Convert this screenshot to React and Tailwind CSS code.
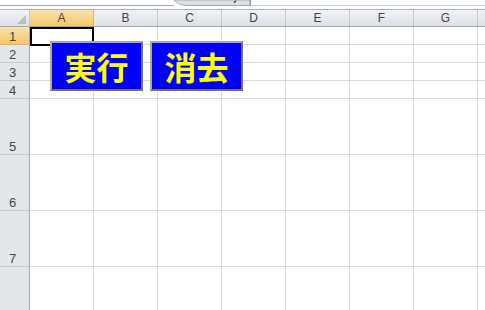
import React from 'react'

const cols = ['A', 'B', 'C', 'D', 'E', 'F', 'G']
const rows = [
  { n: 1, h: 'h-[18px]' },
  { n: 2, h: 'h-[18px]' },
  { n: 3, h: 'h-[18px]' },
  { n: 4, h: 'h-[18px]' },
  { n: 5, h: 'h-[56px]' },
  { n: 6, h: 'h-[56px]' },
  { n: 7, h: 'h-[56px]' },
  { n: 8, h: 'h-[56px]' },
]

const MacroButton = ({ label, className }) => (
  <button
    className={`absolute top-[41px] flex h-[50px] w-[93px] items-center justify-center border-2 border-t-[#a9a9a9] border-l-[#a9a9a9] border-r-[#6f6f6f] border-b-[#6f6f6f] bg-[#0000ff] font-['Noto_Sans_CJK_JP',sans-serif] text-[32px] font-bold leading-none text-[#ffff00] ${className}`}
  >
    {label}
  </button>
)

const App = () => {
  return (
    <div className="relative h-[310px] w-[485px] overflow-hidden bg-white font-['Liberation_Sans',sans-serif] text-[12px] text-[#444]">
      {/* clipped formula bar strip */}
      <div className="flex h-[9px]">
        <div className="relative h-[6px] w-[174px] overflow-hidden border-b border-[#a3a9b1]">
          <span className="absolute left-[66px] top-[-11px] text-[12px] leading-none text-black">A4</span>
        </div>
        <svg width="78" height="9" viewBox="0 0 78 9" className="block">
          <path d="M0 0 C4 4 8 5.5 14 5.5 L76 5.5 L76 0 Z" fill="#dcdfe3" stroke="#a3a9b1" strokeWidth="1" />
          <path d="M60 2.5 L62 1" stroke="#222" strokeWidth="1.4" />
          <line x1="76.5" y1="0" x2="76.5" y2="6" stroke="#8d949c" />
        </svg>
        <div className="h-[6px] flex-1 border-b border-[#c4c9cf]" />
      </div>

      {/* column headers */}
      <div className="flex h-[18px] border-y border-t-[#a7aeb6] border-b-[#9ea6af]">
        <div className="relative w-[30px] border-r border-[#c2c8cf] bg-gradient-to-b from-[#f1f3f6] to-[#dde1e6]">
          <div className="absolute bottom-[2px] right-[3px] h-0 w-0 border-b-[9px] border-l-[9px] border-b-[#b9bec4] border-l-transparent" />
        </div>
        {cols.map((c) => (
          <div
            key={c}
            className={`flex w-[64px] items-center justify-center border-r ${
              c === 'A'
                ? 'border-[#e0b462] bg-gradient-to-b from-[#fbe3ae] to-[#f4c768]'
                : 'border-[#c2c8cf] bg-gradient-to-b from-[#f1f3f6] to-[#dde1e6]'
            }`}
          >
            {c}
          </div>
        ))}
        <div className="flex-1 bg-gradient-to-b from-[#f1f3f6] to-[#dde1e6]" />
      </div>

      {/* grid rows */}
      {rows.map((r) => (
        <div key={r.n} className={`flex ${r.h}`}>
          <div
            className={`flex w-[30px] items-end pb-[1px] pl-[9px] text-[13px] leading-none border-b border-r ${
              r.n === 1
                ? 'border-b-[#e0b462] border-r-[#9ea6af] bg-gradient-to-b from-[#fbe3ae] to-[#f4c768]'
                : 'border-b-[#c5cad1] border-r-[#9ea6af] bg-[#e3e6ea]'
            }`}
          >
            {r.n < 8 ? r.n : ''}
          </div>
          {cols.map((c) => (
            <div key={c} className="w-[64px] border-b border-r border-[#d8dadd]" />
          ))}
          <div className="flex-1 border-b border-[#d8dadd]" />
        </div>
      ))}

      {/* active cell A1 */}
      <div className="absolute left-[30px] top-[27px] h-[19px] w-[64px] border-2 border-black" />

      <MacroButton label="実行" className="left-[50px]" />
      <MacroButton label="消去" className="left-[150px]" />
    </div>
  )
}

export default App
